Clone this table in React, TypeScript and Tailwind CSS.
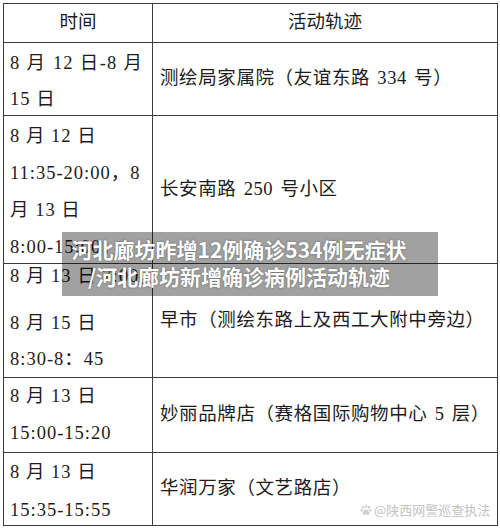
import React from 'react'

const serif = "font-['Liberation_Serif','Noto_Sans_CJK_SC',serif]"

type Row = {
  h: string
  pad: string
  lead: string
  lines: string[]
  justify: number[]
  place: string
}

const rows: Row[] = [
  { h: 'h-[73px]', pad: 'pt-[2px]', lead: 'leading-[36px]', lines: ['8 月 12 日-8 月', '15 日'], justify: [0], place: '测绘局家属院（友谊东路 334 号）' },
  { h: 'h-[148px]', pad: 'pt-[2px]', lead: 'leading-[37px]', lines: ['8 月 12 日', '11:35-20:00，8', '月 13 日', '8:00-15:00，'], justify: [], place: '长安南路 250 号小区' },
  { h: 'h-[114px]', pad: 'pt-0', lead: 'leading-[36px]', lines: ['8 月 13 日 7:00，', '8 月 15 日', '8:30-8：45'], justify: [], place: '早市（测绘东路上及西工大附中旁边）' },
  { h: 'h-[75px]', pad: 'pt-0', lead: 'leading-[37px]', lines: ['8 月 13 日', '15:00-15:20'], justify: [], place: '妙丽品牌店（赛格国际购物中心 5 层）' },
  { h: 'h-[72px]', pad: 'pt-0', lead: 'leading-[38px]', lines: ['8 月 13 日', '15:35-15:55'], justify: [], place: '华润万家（文艺路店）' },
]

function Paw() {
  return (
    <svg width="12" height="12" viewBox="0 0 12 12" className="shrink-0">
      <g fill="#cfcfcf" stroke="#e6e6e6" strokeWidth="0.5">
        <ellipse cx="3" cy="3.2" rx="1.2" ry="1.5" />
        <ellipse cx="6" cy="2.2" rx="1.2" ry="1.5" />
        <ellipse cx="9" cy="3.2" rx="1.2" ry="1.5" />
        <ellipse cx="1.6" cy="6.3" rx="1.1" ry="1.3" />
        <ellipse cx="10.4" cy="6.3" rx="1.1" ry="1.3" />
        <path d="M6 5.6c-1.8 0-3.4 2.1-3.4 3.7 0 1.2 1 1.6 1.9 1.4.6-.1 1-.4 1.5-.4s.9.3 1.5.4c.9.2 1.9-.2 1.9-1.4 0-1.6-1.6-3.7-3.4-3.7z" />
      </g>
    </svg>
  )
}

export default function App() {
  return (
    <div className={`relative w-[500px] h-[529px] bg-white overflow-hidden text-[#1c1c1c] ${serif}`}>
      <div className="pt-[3px] pl-[3px]">
        <div className="w-[495px] border border-[#3c3c3c] text-[18.5px]">
          {/* header */}
          <div className="flex h-[39px] border-b border-[#3c3c3c]">
            <div className="w-[149px] shrink-0 border-r border-[#3c3c3c] flex items-center justify-center">时间</div>
            <div className="flex-1 flex items-center justify-center">活动轨迹</div>
          </div>

          {rows.map((r, i) => (
            <div
              key={i}
              className={`flex ${r.h} ${i < rows.length - 1 ? 'border-b border-[#3c3c3c]' : ''}`}
            >
              <div className={`w-[149px] shrink-0 border-r border-[#3c3c3c] pl-[6px] pr-[9px] tracking-[1px] ${r.pad} ${r.lead} whitespace-nowrap`}>
                {i === 2 ? (
                  <>
                    <div className="leading-[24px]">{r.lines[0]}</div>
                    <div className="mt-[17px]">{r.lines[1]}</div>
                    <div>{r.lines[2]}</div>
                  </>
                ) : (
                  r.lines.map((l, j) => (
                    <div key={j} className={r.justify.includes(j) ? 'text-justify [text-align-last:justify]' : ''}>
                      {l}
                    </div>
                  ))
                )}
              </div>
              <div className="flex-1 flex items-center pl-[7px] whitespace-nowrap tracking-[0.6px] [word-spacing:2px]">{r.place}</div>
            </div>
          ))}
        </div>
      </div>

      {/* title overlay */}
      <div className="absolute left-[62px] top-[232px] w-[376px] h-[64px] bg-black/[0.37] pt-[4px] pr-[22px] text-center">
        <div className="font-['Noto_Sans_CJK_SC','Noto_Sans',sans-serif] font-bold text-[21px] leading-[27px] text-white [text-shadow:0_0_2px_rgba(0,0,0,0.45)] whitespace-nowrap">
          <div>河北廊坊昨增12例确诊534例无症状</div>
          <div>/河北廊坊新增确诊病例活动轨迹</div>
        </div>
      </div>

      {/* watermark */}
      <div className="absolute left-[360px] top-[503px] flex items-center gap-[2px] font-['Noto_Sans_CJK_SC',sans-serif] text-[13px] leading-[14px] text-[#c4c4c4] [text-shadow:0_0_1px_#ffffff]">
        <Paw />
        <span>@陕西网警巡查执法</span>
      </div>
    </div>
  )
}
